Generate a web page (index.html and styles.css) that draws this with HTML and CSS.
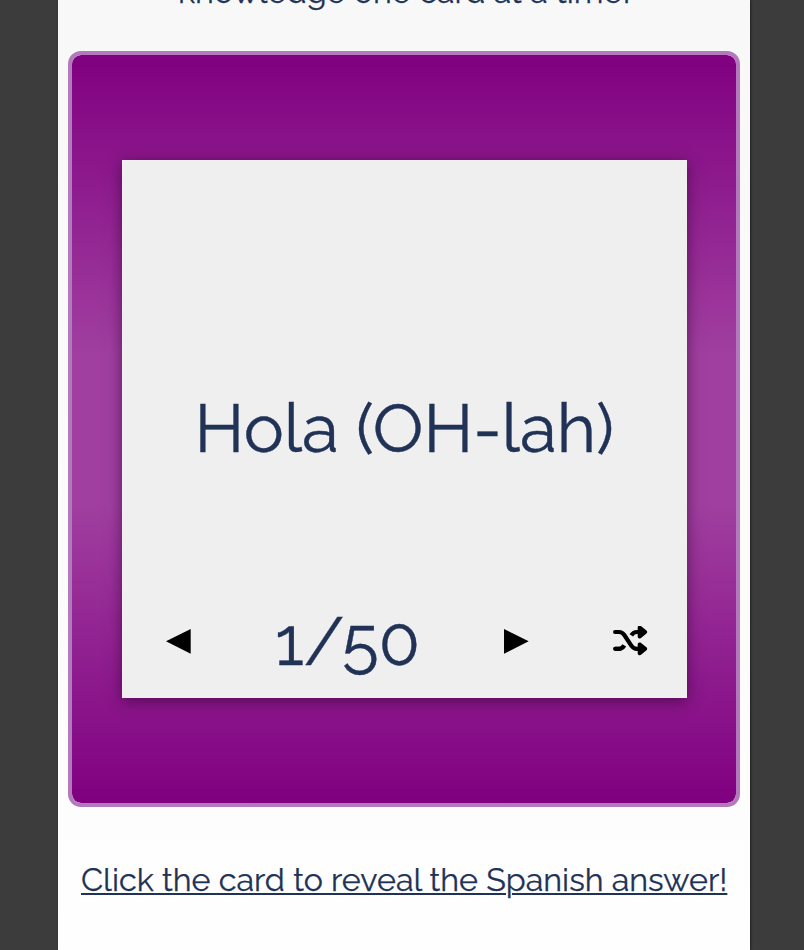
FILE: index.html
```html
<!DOCTYPE html>
<html lang="en">
<head>
<meta charset="utf-8">
<title>Spanish flashcards</title>
<link rel="stylesheet" href="styles.css">
</head>
<body>
<main class="page">
  <p class="intro"><span>knowledge one card at a time!</span></p>
  <section class="deck">
    <div class="card">
      <p class="word">Hola (OH-lah)</p>
      <div class="controls">
        <button class="prev" aria-label="Previous"><svg width="25" height="25" viewBox="0 0 25 25"><path d="M0 12.3 24.7 0V24.7Z"/></svg></button>
        <p class="count">1/50</p>
        <button class="next" aria-label="Next"><svg width="25" height="25" viewBox="0 0 25 25"><path d="M0 0 24.7 12.3 0 24.7Z"/></svg></button>
        <button class="shuffle" aria-label="Shuffle"><svg width="35" height="30" viewBox="0 0 35 30"><g fill="none" stroke="#000" stroke-width="4.2" stroke-linecap="round"><path d="M2.1 6H6Q9.3 6 11.3 9L18.3 19.6Q20.4 22.8 24 22.8H27"/><path d="M2.1 22.8H6Q9.3 22.8 11.3 19.4" stroke-linecap="butt"/><path d="M2.1 22.8H6"/><path d="M18.3 9.3Q20.4 6 24 6H27" stroke-linecap="butt"/></g><path stroke="#000" stroke-width="1.4" stroke-linejoin="round" d="M25.4 1.5Q25.6 0 27.3.4L33 5Q34 6 33 7L27.3 11.6Q25.6 12 25.4 10.6ZM25.4 18.3Q25.6 16.8 27.3 17.2L33 21.8Q34 22.8 33 23.8L27.3 28.4Q25.6 28.8 25.4 27.4Z"/></svg></button>
      </div>
    </div>
  </section>
  <p class="hint">Click the card to reveal the Spanish answer!</p>
</main>
</body>
</html>
```
FILE: styles.css
```css
* { box-sizing: border-box; }
body {
  margin: 0;
  height: 950px;
  overflow: hidden;
  background: #3c3c3c;
  color: #203256;
  font-family: Raleway, Lato, sans-serif;
  -webkit-text-stroke: .25px #203256;
}
p { margin: 0; white-space: nowrap; }
.page {
  display: flow-root;
  width: 692px;
  height: 950px;
  margin-left: 58px;
  padding: 0 10px;
  overflow: hidden;
  background: linear-gradient(#f8f8f8, #fefefe);
  box-shadow: 1px 0 2px #202020;
}
.intro {
  display: flow-root;
  height: 51px;
  margin-left: 110px;
  font-size: 32.3px;
  line-height: 40px;
}
.intro span { display: block; margin-top: -28px; }
.deck {
  height: 756px;
  padding: 105px 50px;
  border: 4px solid #b27abd;
  border-radius: 13px;
  background: linear-gradient(#800080, #a03fa0 40%, #a03fa0 60%, #800080) padding-box;
}
.card {
  display: flex;
  flex-direction: column;
  width: 565px;
  height: 538px;
  background: #efefef;
  box-shadow: 0 3px 14px rgba(45, 0, 45, .6);
}
.word {
  padding: 227px 0 0 72.5px;
  font-size: 67.4px;
  line-height: 84px;
  -webkit-text-stroke-width: .4px;
}
.controls {
  display: grid;
  grid-template-columns: 109px 229px 109px 74px;
  align-items: center;
  height: 90px;
  margin-top: 125px;
  padding-left: 44px;
}
button {
  display: block;
  justify-self: start;
  padding: 0;
  border: 0;
  background: none;
  line-height: 0;
}
.count {
  padding-top: 2px;
  font-size: 67.4px;
  line-height: 80px;
  -webkit-text-stroke-width: .4px;
}
.hint {
  margin: 53px 0 0 13px;
  font-size: 32.25px;
  line-height: 40px;
  text-decoration: underline;
  text-decoration-thickness: 2px;
  text-underline-offset: 2px;
}
```
